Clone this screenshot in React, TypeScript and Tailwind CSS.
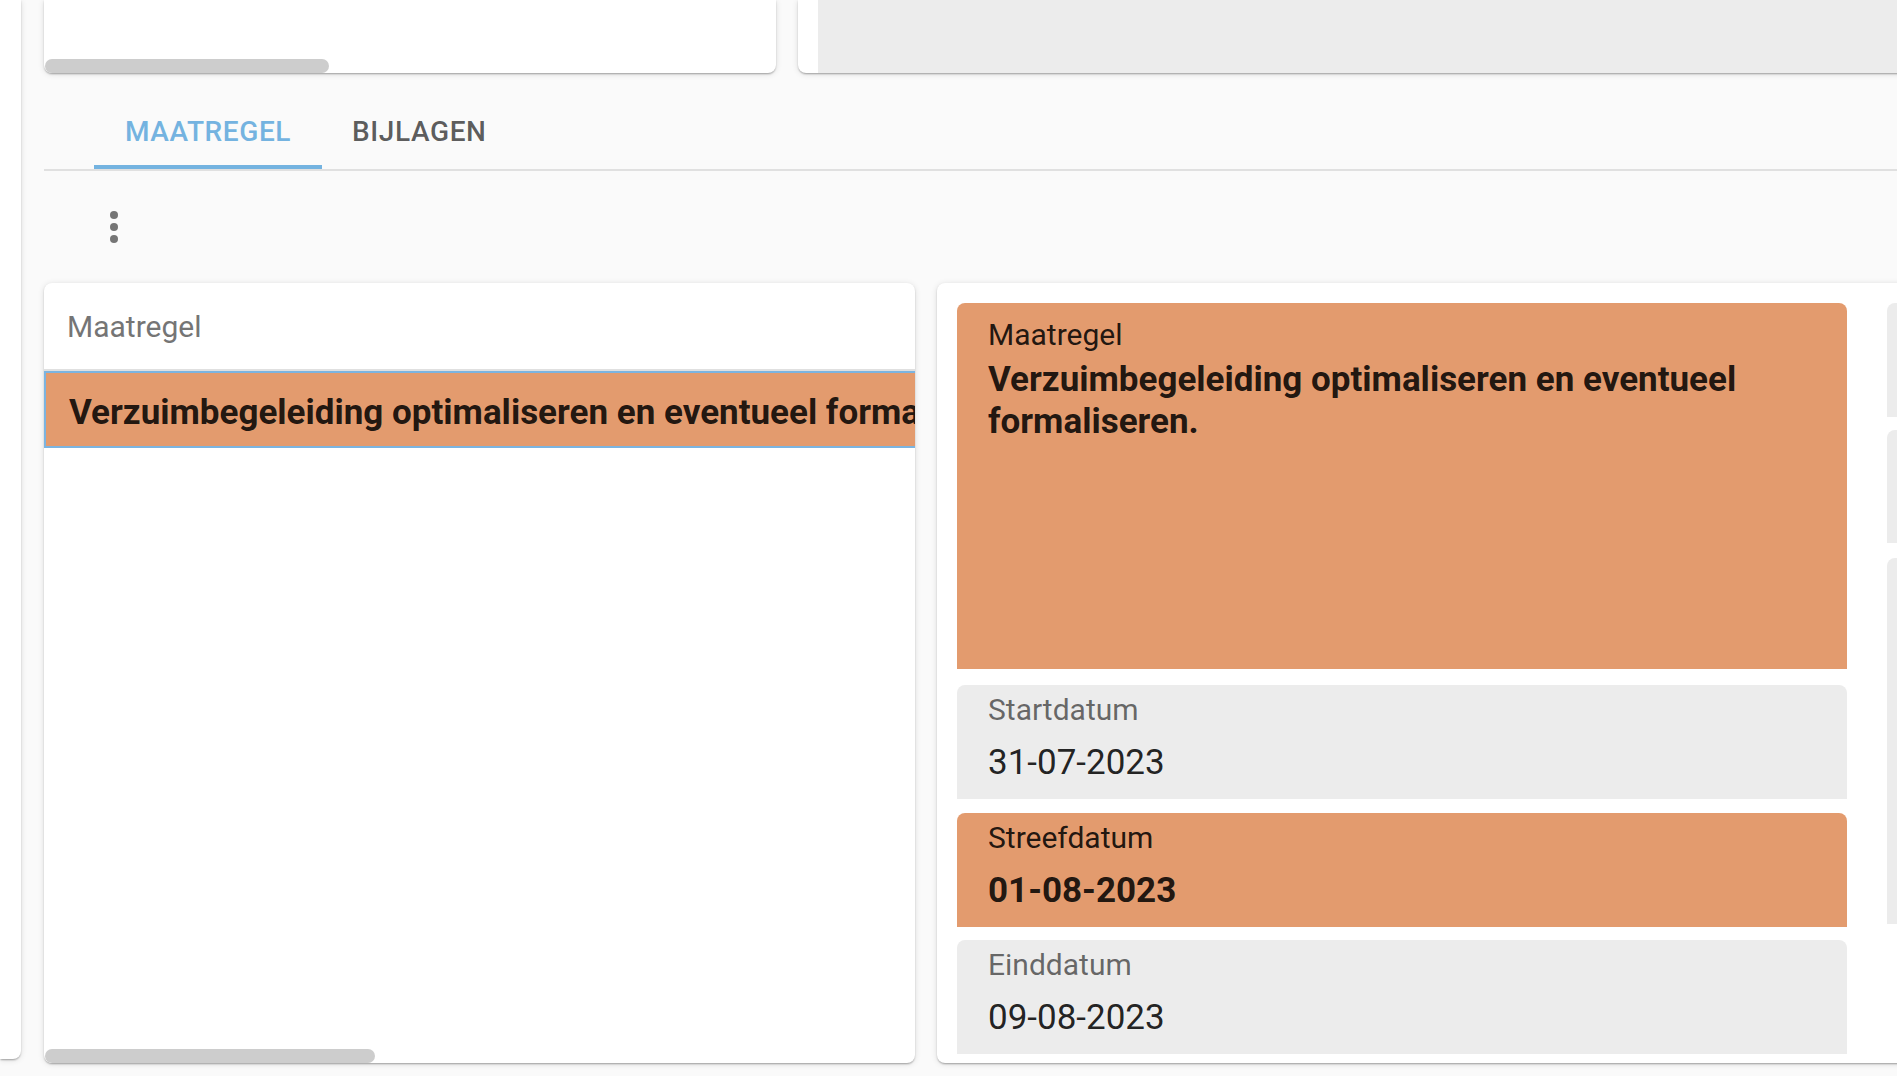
import React from 'react';

const font = { fontFamily: 'Roboto, "Noto Sans", Arial, sans-serif' };

interface FieldProps {
  label: string;
  value?: string;
  highlight?: boolean;
  tall?: boolean;
  className?: string;
}

const Field = ({ label, value, highlight, tall, className = '' }: FieldProps) => (
  <div
    className={`rounded-t-[8px] px-[31px] ${tall ? 'h-[366px] pt-[17px]' : 'h-[114px] pt-[10px]'} ${
      highlight ? 'bg-[#e39b6e]' : 'bg-[#ececec]'
    } ${className}`}
  >
    <div
      className={`text-[30px] leading-[30px] ${
        highlight ? 'text-[rgba(0,0,0,0.87)]' : 'text-[rgba(0,0,0,0.58)]'
      }`}
    >
      {label}
    </div>
    {value && tall && (
      <div className="mt-[9px] text-[35px] leading-[42px] font-bold text-[rgba(0,0,0,0.87)]">
        {value}
      </div>
    )}
    {value && !tall && (
      <div
        className={`mt-[18px] text-[35px] leading-[40px] text-[rgba(0,0,0,0.87)] ${
          highlight ? 'font-bold' : ''
        }`}
      >
        {value}
      </div>
    )}
  </div>
);

const MoreVert = () => (
  <svg width="48" height="48" viewBox="0 0 24 24" fill="#757575">
    <circle cx="12" cy="6" r="2" />
    <circle cx="12" cy="12" r="2" />
    <circle cx="12" cy="18" r="2" />
  </svg>
);

const cardShadow =
  'shadow-[0_2px_2px_-1px_rgba(0,0,0,0.2),0_1px_2px_0_rgba(0,0,0,0.14),0_1px_6px_0_rgba(0,0,0,0.12)]';

export default function App() {
  const title = 'Verzuimbegeleiding optimaliseren en eventueel formaliseren.';

  return (
    <div className="flex h-[1076px] w-full overflow-hidden bg-[#fafafa]" style={font}>
      {/* side drawer edge */}
      <div className={`h-[1059px] w-[21px] shrink-0 rounded-br-[8px] bg-white ${cardShadow}`} />

      <div className="ml-[23px] flex min-w-0 flex-1 flex-col">
        {/* top cards */}
        <div className="flex h-[73px] shrink-0 gap-[22px]">
          <div className={`relative w-[732px] shrink-0 rounded-b-[8px] bg-white ${cardShadow}`}>
            <div className="absolute bottom-0 left-[1px] h-[14px] w-[284px] rounded-full bg-[#cdcdcd]" />
          </div>
          <div className={`flex w-[1200px] shrink-0 rounded-bl-[8px] bg-white pl-[20px] ${cardShadow}`}>
            <div className="flex-1 bg-[#ececec]" />
          </div>
        </div>

        {/* tabs */}
        <div className="flex h-[98px] shrink-0 border-b-2 border-[#e0e0e0] pl-[50px]">
          <button className="relative flex h-[96px] items-center px-[31px] pt-[22px] text-[28px] font-medium uppercase tracking-[0.6px] text-[#74b3e0]">
            Maatregel
            <span className="absolute bottom-0 left-0 right-0 h-[4px] bg-[#74b3e0]" />
          </button>
          <button className="flex h-[96px] items-center px-[30px] pt-[22px] text-[28px] font-medium uppercase tracking-[0.6px] text-[rgba(0,0,0,0.65)]">
            Bijlagen
          </button>
        </div>

        {/* toolbar */}
        <div className="flex h-[112px] shrink-0 items-center pl-[46px]">
          <MoreVert />
        </div>

        {/* content cards */}
        <div className="flex h-[780px] shrink-0 gap-[22px]">
          <div className={`relative w-[871px] shrink-0 overflow-hidden rounded-[8px] bg-white ${cardShadow}`}>
            <div className="flex h-[88px] items-center border-b-2 border-[#e0e0e0] pl-[23px] text-[30px] text-[#757575]">
              Maatregel
            </div>
            <div className="flex h-[77px] items-center overflow-hidden whitespace-nowrap border-y-2 border-l-2 border-[#7cb4e0] bg-[#e39b6e] pl-[23px] pt-[7px] text-[35px] font-bold text-[rgba(0,0,0,0.87)]">
              {title}
            </div>
            <div className="absolute bottom-0 left-[1px] h-[14px] w-[330px] rounded-full bg-[#cdcdcd]" />
          </div>

          <div className={`flex w-[1100px] shrink-0 gap-[40px] rounded-[8px] bg-white pl-[20px] pt-[20px] ${cardShadow}`}>
            <div className="flex w-[890px] shrink-0 flex-col">
              <Field label="Maatregel" value={title} highlight tall />
              <Field label="Startdatum" value="31-07-2023" className="mt-[16px]" />
              <Field label="Streefdatum" value="01-08-2023" highlight className="mt-[14px]" />
              <Field label="Einddatum" value="09-08-2023" className="mt-[13px]" />
            </div>
            <div className="flex w-[400px] shrink-0 flex-col">
              <div className="h-[114px] rounded-t-[8px] bg-[#ececec]" />
              <div className="mt-[13px] h-[113px] rounded-t-[8px] bg-[#ececec]" />
              <div className="mt-[15px] h-[366px] rounded-t-[8px] bg-[#ececec]" />
            </div>
          </div>
        </div>
      </div>
    </div>
  );
}
